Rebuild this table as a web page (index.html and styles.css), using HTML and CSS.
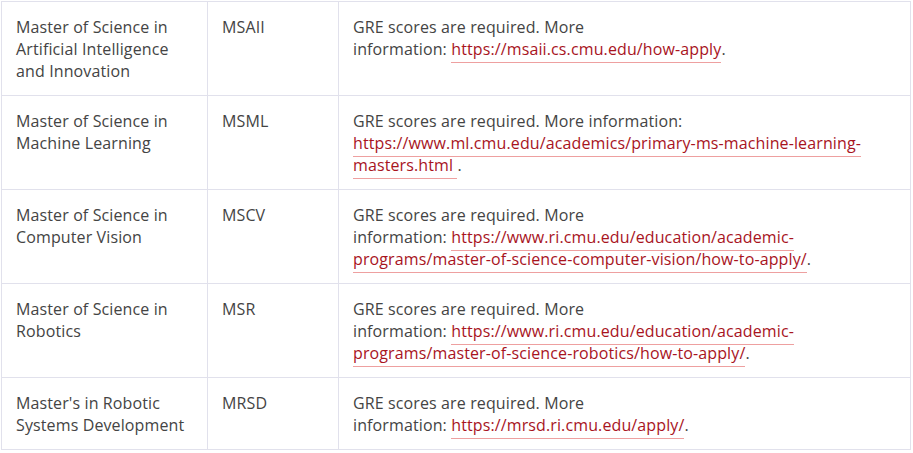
FILE: index.html
```html
<!DOCTYPE html>
<html lang="en">
<head>
<meta charset="utf-8">
<title>Programs</title>
<link rel="stylesheet" href="styles.css">
</head>
<body>
<table class="programs">
  <colgroup>
    <col class="c-name">
    <col class="c-abbr">
    <col class="c-info">
  </colgroup>
  <tbody>
    <tr>
      <td>Master of Science in Artificial Intelligence and Innovation</td>
      <td>MSAII</td>
      <td>GRE scores are required. More information:&nbsp;<a href="#">https://msaii.cs.cmu.edu/how-apply</a>.</td>
    </tr>
    <tr>
      <td>Master of Science in Machine Learning</td>
      <td>MSML</td>
      <td>GRE scores are required. More information: <a href="#">https://www.ml.cmu.edu/academics/primary-ms-machine-learning-masters.html </a>.</td>
    </tr>
    <tr>
      <td>Master of Science in Computer Vision</td>
      <td>MSCV</td>
      <td>GRE scores are required. More information:&nbsp;<a href="#">https://www.ri.cmu.edu/education/academic-programs/master-of-science-computer-vision/how-to-apply/</a>.</td>
    </tr>
    <tr>
      <td>Master of Science in Robotics</td>
      <td>MSR</td>
      <td>GRE scores are required. More information:&nbsp;<a href="#">https://www.ri.cmu.edu/education/academic-programs/master-of-science-robotics/how-to-apply/</a>.</td>
    </tr>
    <tr>
      <td>Master's in Robotic Systems Development</td>
      <td>MRSD</td>
      <td>GRE scores are required. More information:&nbsp;<a href="#">https://mrsd.ri.cmu.edu/apply/</a>.</td>
    </tr>
  </tbody>
</table>
</body>
</html>
```
FILE: styles.css
```css
html, body {
  margin: 0;
  padding: 0;
  background: #ffffff;
}

body {
  padding: 1px 0 0 1px;
  font-family: "Open Sans", "Liberation Sans", sans-serif;
  font-weight: 400;
  font-size: 16px;
  line-height: 22px;
  letter-spacing: 0.12px;
  color: #444444;
}

.programs {
  width: 909px;
  border-collapse: collapse;
  table-layout: fixed;
}

.c-name { width: 206px; }
.c-abbr { width: 131px; }
.c-info { width: 572px; }

.programs td {
  border: 1px solid #e1e1ec;
  padding: 14px 14px 13px 14px;
  vertical-align: top;
}

.programs a {
  color: #a8141e;
  text-decoration: none;
  border-bottom: 1px solid #eea0a0;
  padding-bottom: 2px;
}
```
